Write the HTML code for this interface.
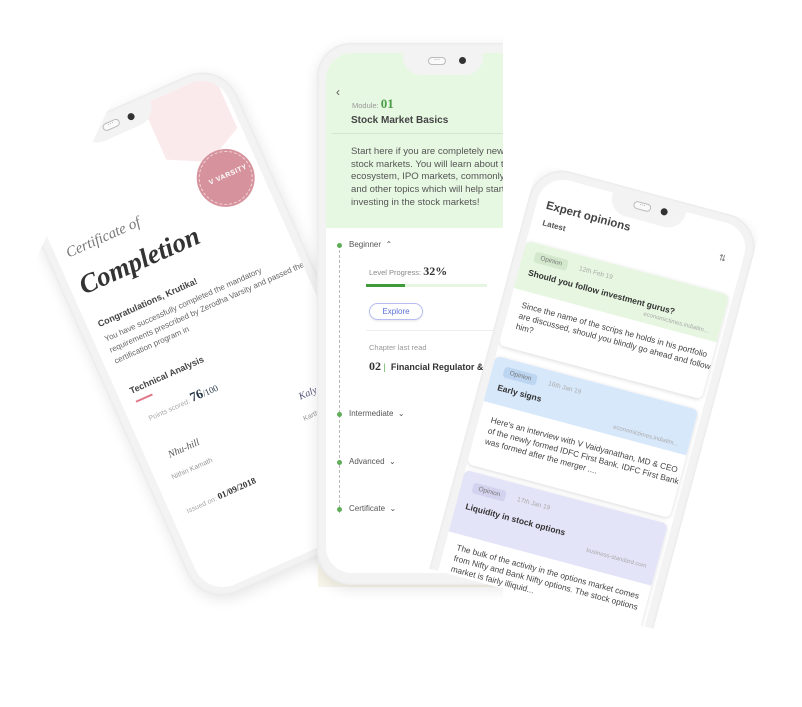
<!DOCTYPE html>
<html><head><meta charset="utf-8"><style>
*{margin:0;padding:0;box-sizing:border-box}
body{width:802px;height:707px;background:#fff;position:relative;overflow:hidden;font-family:"Liberation Sans",sans-serif;color:#333}
.abs{position:absolute}
.serif{font-family:"Liberation Serif",serif}
.frame{background:#f3f3f3;box-shadow:0 4px 14px rgba(0,0,0,.10),inset 0 0 3px rgba(0,0,0,.08)}
.notch{position:absolute;background:#f3f3f3;border-radius:0 0 18px 18px}
.dots{position:absolute;width:18px;height:8px;border:1px solid #bbb;border-radius:5px;font-size:6px;line-height:4px;text-align:center;color:#555;background:#fafafa}
.cam{position:absolute;width:7px;height:7px;border-radius:50%;background:#333}
</style></head><body>

<!-- LEFT PHONE -->
<div class="abs" style="left:0;top:0;width:802px;height:707px;clip-path:polygon(161px 0,802px 0,802px 707px,0 707px,0 333px)">
 <div class="abs frame" style="left:92px;top:88px;width:240px;height:492px;border-radius:38px;transform:rotate(-24deg)">
  <div class="abs" style="left:9px;top:8px;width:222px;height:476px;background:#fff;border-radius:30px;overflow:hidden">
   <div class="abs" style="left:140px;top:0;width:78px;height:80px;background:#fbeaec;clip-path:polygon(0 0,100% 0,100% 75%,50% 100%,0 75%)"></div>
   <div class="abs" style="left:160px;top:74px;width:54px;height:54px;border-radius:50%;background:#d6939d;border:1px dashed #f3d6da;box-shadow:0 0 0 2px #d6939d"></div>
   <div class="abs" style="left:170px;top:96px;font-size:7px;font-weight:bold;color:#fff;letter-spacing:.5px">V VARSITY</div>
   <div class="abs serif" style="left:11px;top:98px;font-size:15px;font-style:italic;color:#777">Certificate of</div>
   <div class="abs serif" style="left:10px;top:126px;font-size:27px;font-style:italic;font-weight:bold;color:#333">Completion</div>
   <div class="abs" style="left:11px;top:178px;font-size:9px;font-weight:bold;color:#444">Congratulations, Krutika!</div>
   <div class="abs" style="left:11px;top:194px;font-size:8px;line-height:12px;color:#666;width:215px">You have successfully completed the mandatory requirements prescribed by Zerodha Varsity and passed the certification program in</div>
   <div class="abs" style="left:13px;top:252px;font-size:9px;font-weight:bold;color:#444">Technical Analysis</div>
   <div class="abs" style="left:14px;top:268px;width:18px;height:2px;background:#e0788a"></div>
   <div class="abs" style="left:19px;top:280px;font-size:7px;color:#aaa">Points scored: <span class="serif" style="font-size:13px;font-weight:bold;color:#234">76</span><span class="serif" style="font-size:9px;color:#234">/100</span></div>
   <div class="abs serif" style="left:22px;top:326px;font-size:10px;font-style:italic;color:#555">Nhu-hill</div>
   <div class="abs" style="left:16px;top:350px;font-size:7px;color:#999">Nithin Kamath</div>
   <div class="abs" style="left:16px;top:384px;font-size:7px;color:#aaa">Issued on: <span class="serif" style="font-size:9px;color:#333;font-weight:bold">01/09/2018</span></div>
   <div class="abs serif" style="left:165px;top:326px;font-size:10px;font-style:italic;color:#557">Kaly</div>
   <div class="abs" style="left:160px;top:350px;font-size:7px;color:#999">Karthik</div>
  </div>
  <div class="notch" style="left:82px;top:6px;width:76px;height:20px"></div>
  <div class="dots" style="left:104px;top:10px">···</div>
  <div class="cam" style="left:131px;top:11px"></div>
 </div>
</div>

<!-- MIDDLE PHONE -->
<div class="abs" style="left:0;top:0;width:503px;height:707px;overflow:hidden">
 <div class="abs" style="left:318px;top:565px;width:200px;height:22px;background:#f8f6ea"></div>
 <div class="abs frame" style="left:317px;top:43px;width:260px;height:542px;border-radius:34px">
  <div class="abs" style="left:9px;top:10px;width:242px;height:520px;background:#fff;border-radius:26px;overflow:hidden">
   <div class="abs" style="left:0;top:0;width:242px;height:175px;background:#e6f7e2"></div>
   <div class="abs" style="left:10px;top:32px;font-size:12px;color:#555">&lsaquo;</div>
   <div class="abs" style="left:26px;top:43px;font-size:7.5px;color:#999">Module: <span class="serif" style="font-size:13px;color:#4a9e45;font-weight:bold">01</span></div>
   <div class="abs" style="left:25px;top:62px;font-size:10px;font-weight:bold;color:#444">Stock Market Basics</div>
   <div class="abs" style="left:6px;top:80px;width:236px;height:1px;background:#d4e6d0"></div>
   <div class="abs" style="left:25px;top:93px;font-size:9.6px;line-height:12.7px;color:#555;white-space:nowrap">Start here if you are completely new to<br>stock markets. You will learn about the<br>ecosystem, IPO markets, commonly used<br>and other topics which will help start<br>investing in the stock markets!</div>
   <div class="abs" style="left:13px;top:192px;height:268px;border-left:1px dashed #bbb"></div>
   <div class="abs" style="left:11px;top:190px;width:5px;height:5px;border-radius:50%;background:#5fae57"></div>
   <div class="abs" style="left:11px;top:359px;width:5px;height:5px;border-radius:50%;background:#5fae57"></div>
   <div class="abs" style="left:11px;top:407px;width:5px;height:5px;border-radius:50%;background:#5fae57"></div>
   <div class="abs" style="left:11px;top:454px;width:5px;height:5px;border-radius:50%;background:#5fae57"></div>
   <div class="abs" style="left:23px;top:187px;font-size:8px;color:#555">Beginner &nbsp;&#8963;</div>
   <div class="abs" style="left:43px;top:211px;font-size:7.5px;color:#888">Level Progress: <span class="serif" style="font-size:12px;color:#333;font-weight:bold">32%</span></div>
   <div class="abs" style="left:40px;top:231px;width:121px;height:3px;background:#e6f6e2"></div>
   <div class="abs" style="left:40px;top:231px;width:39px;height:3px;background:#3f9a3a"></div>
   <div class="abs" style="left:43px;top:250px;width:54px;height:17px;border:1px solid #b8bff0;border-radius:9px;font-size:8px;color:#5a6fd6;text-align:center;line-height:15px;box-shadow:0 1px 2px rgba(0,0,0,.1)">Explore</div>
   <div class="abs" style="left:40px;top:277px;width:202px;height:1px;background:#eee"></div>
   <div class="abs" style="left:43px;top:290px;font-size:7.5px;color:#999">Chapter last read</div>
   <div class="abs" style="left:43px;top:306px;font-size:9px;font-weight:bold;color:#333;white-space:nowrap"><span class="serif" style="font-size:12px">02</span> <span style="color:#5fae57;font-weight:normal">|</span> &nbsp;Financial Regulator &amp;</div>
   <div class="abs" style="left:23px;top:356px;font-size:8px;color:#555">Intermediate &nbsp;&#8964;</div>
   <div class="abs" style="left:23px;top:404px;font-size:8px;color:#555">Advanced &nbsp;&#8964;</div>
   <div class="abs" style="left:23px;top:451px;font-size:8px;color:#555">Certificate &nbsp;&#8964;</div>
  </div>
  <div class="notch" style="left:86px;top:8px;width:80px;height:24px;background:#f3f3f3"></div>
  <div class="dots" style="left:111px;top:14px">···</div>
  <div class="cam" style="left:142px;top:14px"></div>
 </div>
</div>

<!-- RIGHT PHONE -->
<div class="abs" style="left:538px;top:163px;width:232px;height:420px;transform-origin:0 0;transform:rotate(15deg);overflow:hidden">
 <div class="abs frame" style="left:0;top:0;width:232px;height:500px;border-radius:34px">
  <div class="abs" style="left:9px;top:9px;width:214px;height:480px;background:#fff;border-radius:26px;overflow:hidden">
   <div class="abs" style="left:10px;top:24px;font-size:11.5px;font-weight:bold;color:#444">Expert opinions</div>
   <div class="abs" style="left:11px;top:43px;font-size:8px;font-weight:bold;color:#555">Latest</div>
   <div class="abs" style="left:190px;top:30px;font-size:9px;color:#777">&#8645;</div>
   <!-- card1 -->
   <div class="abs" style="left:0;top:69px;width:210px;height:108px;background:#fff;border-radius:6px;box-shadow:0 1px 4px rgba(0,0,0,.15);overflow:hidden">
    <div style="height:49px;background:#e6f6e0"></div>
    <div class="abs" style="left:12px;top:8px;padding:2px 6px;background:#d3e8cc;border-radius:3px;font-size:6.5px;color:#777">Opinion</div>
    <div class="abs" style="left:58px;top:10px;font-size:6.5px;color:#aaa">12th Feb 19</div>
    <div class="abs" style="left:10px;top:25px;font-size:8.5px;font-weight:bold;color:#333;white-space:nowrap">Should you follow investment gurus?</div>
    <div class="abs" style="left:132px;top:38px;font-size:6px;color:#aaa;white-space:nowrap">economictimes.indiatim...</div>
    <div class="abs" style="left:12px;top:58px;font-size:8.3px;line-height:11px;color:#444;width:200px">Since the name of the scrips he holds in his portfolio are discussed, should you blindly go ahead and follow him?</div>
   </div>
   <!-- card2 -->
   <div class="abs" style="left:0;top:188px;width:210px;height:112px;background:#fff;border-radius:6px;box-shadow:0 1px 4px rgba(0,0,0,.15);overflow:hidden">
    <div style="height:47px;background:#d8e8fb"></div>
    <div class="abs" style="left:12px;top:8px;padding:2px 6px;background:#bcd5f1;border-radius:3px;font-size:6.5px;color:#777">Opinion</div>
    <div class="abs" style="left:58px;top:10px;font-size:6.5px;color:#aaa">16th Jan 19</div>
    <div class="abs" style="left:10px;top:25px;font-size:8.5px;font-weight:bold;color:#333">Early signs</div>
    <div class="abs" style="left:132px;top:36px;font-size:6px;color:#aaa;white-space:nowrap">economictimes.indiatim...</div>
    <div class="abs" style="left:12px;top:58px;font-size:8.3px;line-height:11px;color:#444;width:200px">Here's an interview with V Vaidyanathan, MD &amp; CEO of the newly formed IDFC First Bank. IDFC First Bank was formed after the merger ....</div>
   </div>
   <!-- card3 -->
   <div class="abs" style="left:0;top:306px;width:210px;height:130px;background:#fff;border-radius:6px;box-shadow:0 1px 4px rgba(0,0,0,.15);overflow:hidden">
    <div style="height:64px;background:#e4e4f9"></div>
    <div class="abs" style="left:12px;top:10px;padding:2px 6px;background:#d3d3ef;border-radius:3px;font-size:6.5px;color:#777">Opinion</div>
    <div class="abs" style="left:58px;top:12px;font-size:6.5px;color:#aaa">17th Jan 19</div>
    <div class="abs" style="left:10px;top:30px;font-size:8.5px;font-weight:bold;color:#333">Liquidity in stock options</div>
    <div class="abs" style="left:138px;top:44px;font-size:6px;color:#aaa;white-space:nowrap">business-standard.com</div>
    <div class="abs" style="left:12px;top:72px;font-size:8.3px;line-height:11px;color:#444;width:200px">The bulk of the activity in the options market comes from Nifty and Bank Nifty options. The stock options market is fairly illiquid...</div>
   </div>
  </div>
  <div class="notch" style="left:80px;top:7px;width:76px;height:22px"></div>
  <div class="dots" style="left:103px;top:11px">···</div>
  <div class="cam" style="left:131px;top:11px"></div>
 </div>
</div>
</body></html>
